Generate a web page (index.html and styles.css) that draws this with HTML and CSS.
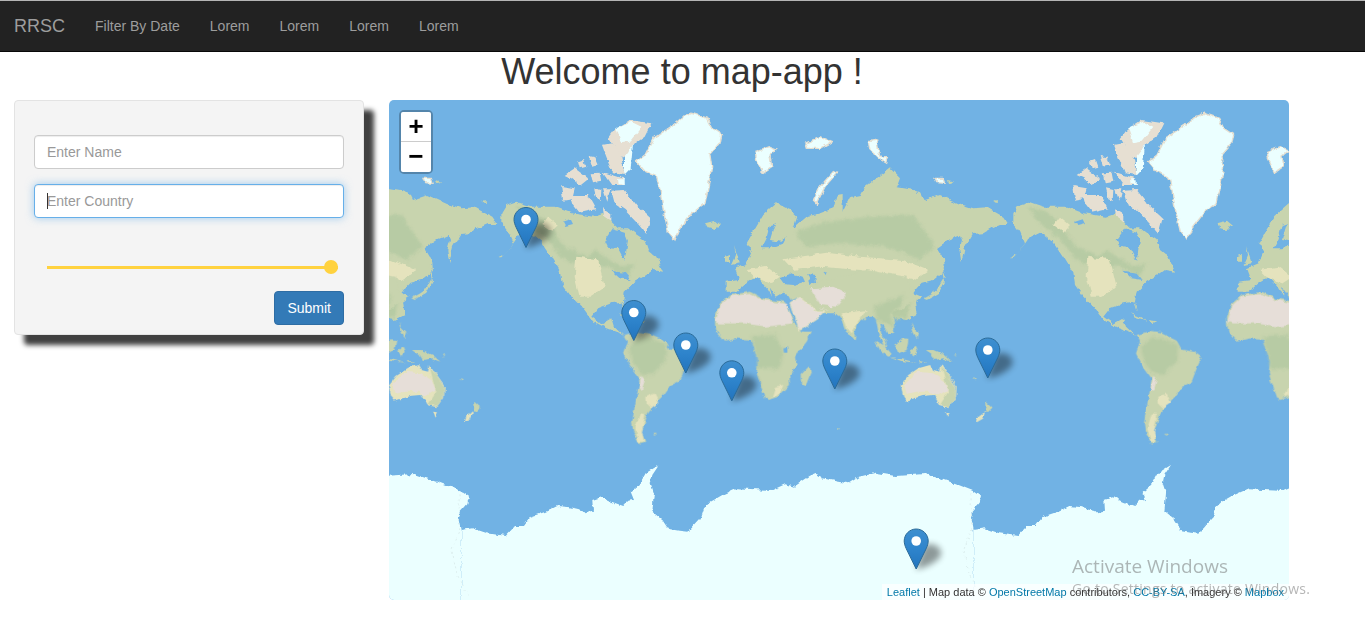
FILE: index.html
```html
<!DOCTYPE html>
<html lang="en">
<head>
  <meta charset="UTF-8" />
  <title>map-app</title>
  <link rel="stylesheet" href="styles.css">
</head>
<body>
  <nav class="navbar">
    <a class="brand" href="#">RRSC</a>
    <ul class="nav-links">
      <li><a href="#">Filter By Date</a></li>
      <li><a href="#">Lorem</a></li>
      <li><a href="#">Lorem</a></li>
      <li><a href="#">Lorem</a></li>
      <li><a href="#">Lorem</a></li>
    </ul>
  </nav>

  <h1 class="title">Welcome to map-app !</h1>

  <div class="content">
    <form class="panel">
      <input class="field" type="text" placeholder="Enter Name">
      <div class="field-wrap">
        <input class="field is-focused" type="text" placeholder="Enter Country">
        <span class="caret"></span>
      </div>
      <input class="range" type="range" min="0" max="100" value="100">
      <div class="actions"><button class="submit" type="button">Submit</button></div>
    </form>

    <div class="map">
      <svg class="tiles" viewBox="389 100 900 500" width="900" height="500">
        <defs>
          <linearGradient id="pinFill" x1="0" y1="0" x2="0" y2="1">
            <stop offset="0" stop-color="#3f8fcf"/>
            <stop offset=".5" stop-color="#2e84cc"/>
            <stop offset="1" stop-color="#2374bd"/>
          </linearGradient>
          <filter id="soft" x="-60%" y="-60%" width="220%" height="220%">
            <feGaussianBlur stdDeviation="3.4"/>
          </filter>
          <!-- roughens the polygon edges so the coasts look like coasts -->
          <filter id="rough" filterUnits="userSpaceOnUse" x="389" y="100" width="900" height="500" color-interpolation-filters="sRGB">
            <feTurbulence type="fractalNoise" baseFrequency=".14" numOctaves="3" seed="7" result="noise"/>
            <feDisplacementMap in="SourceGraphic" in2="noise" scale="5" xChannelSelector="R" yChannelSelector="G"/>
          </filter>

          <g id="pin">
            <path class="pin-shadow" d="M12 41 L20 17 C32 12 42 22 35 30 C29 36 21 39 12 41Z" filter="url(#soft)"/>
            <path class="pin-body" d="M12.5 .5C5.9 .5 .5 5.9 .5 12.5C.5 15 1.4 17.7 2.6 20.3L12.5 40.5L22.4 20.3C23.6 17.7 24.5 15 24.5 12.5C24.5 5.9 19.1 .5 12.5 .5Z"/>
            <circle class="pin-dot" cx="12.5" cy="12.5" r="4.8"/>
          </g>

          <g id="world">
            <!-- antarctica -->
            <g transform="translate(389 450) scale(.33333)">
              <polygon class="ice" points="218,240 250,235 295,250 350,258 378,228 405,228 425,200 470,185 505,168 545,172 580,180 590,190 612,185 610,150 635,142 665,155 700,168 715,152 735,150 725,125 750,105 770,70 810,45 790,75 785,100 795,130 790,185 820,210 840,240 870,245 895,248 935,205 945,175 965,155 1000,135 1045,115 1100,118 1150,120 1190,102 1215,110 1260,80 1280,72 1300,85 1350,95 1380,100 1410,80 1460,68 1520,78 1610,72 1680,95 1750,122 1776,140 1771,160 1748,185 1746,200 1754,240 1754,500 218,500"/>
              <path class="ice-line" d="M210 130 L212 240 L188 300 L205 375 L240 440"/>
            </g>

            <!-- north america -->
            <g transform="translate(448 100) scale(.33333)">
              <polygon class="land" points="160,340 175,315 205,305 250,320 320,320 370,340 440,350 470,340 490,365 510,385 540,385 560,400 590,420 600,450 625,470 645,515 615,510 595,525 560,545 530,575 525,605 530,635 520,605 490,610 450,625 430,650 460,672 490,655 498,680 530,710 515,700 475,685 430,660 400,620 370,590 345,555 340,520 310,470 280,425 240,395 210,410 170,465 195,430 180,395 160,370"/>
              <polygon class="forest" points="205,320 250,330 300,370 350,440 420,470 440,450 520,500 560,490 540,530 480,500 420,500 370,490 340,470 290,410 240,370"/>
              <polygon class="steppe" points="385,470 450,478 470,560 425,590 395,590 380,530"/>
              <polygon class="steppe" points="300,350 330,375 310,395 280,375"/>
              <polygon class="water" points="470,420 495,385 530,395 540,420 530,482 510,445 480,440"/>
              <polygon class="water" points="490,512 530,518 548,540 515,535"/>
              <polygon class="water" points="345,365 368,358 375,372 352,378"/>
              <polygon class="arctic" points="482,115 500,90 545,60 610,70 590,110 555,135 530,175 510,165"/>
              <polygon class="ice-cap" points="505,85 550,65 580,80 545,125 520,130"/>
              <polygon class="ice-cap" points="528,170 555,135 548,205 528,225"/>
              <polygon class="arctic" points="462,135 490,130 520,170 530,225 495,220 475,170"/>
              <polygon class="arctic" points="350,225 380,205 420,235 395,255 370,235"/>
              <polygon class="arctic" points="390,185 405,180 412,200 395,205"/>
              <polygon class="arctic" points="422,168 442,172 452,195 432,200"/>
              <polygon class="arctic" points="428,220 455,218 460,245 435,250"/>
              <polygon class="arctic" points="462,215 525,235 530,255 490,255"/>
              <polygon class="ice-cap" points="510,238 530,238 530,255 512,252"/>
              <polygon class="arctic" points="340,258 380,265 372,298 345,302"/>
              <polygon class="arctic" points="368,285 420,285 442,325 395,335 375,310"/>
              <polygon class="arctic" points="438,265 460,270 458,300 445,295"/>
              <polygon class="arctic" points="465,265 487,265 478,305"/>
              <polygon class="arctic" points="490,272 530,270 570,320 608,355 595,402 570,372 530,330 500,310"/>
              <polygon class="arctic" points="465,325 490,340 490,365 468,350"/>
              <polygon class="land" points="620,490 640,505 625,512"/>
              <polygon class="land" points="512,640 535,648 560,662 530,652"/>
              <polygon class="land" points="565,660 592,664 578,670"/>
              <polygon class="land" points="100,300 115,303 108,308"/>
              <polygon class="land" points="150,472 170,462 160,472"/>
            </g>

            <!-- south america -->
            <g transform="translate(508 300) scale(.33333)">
              <polygon class="land" points="350,105 385,95 425,100 470,122 485,148 520,155 545,172 530,205 515,245 488,258 465,290 445,310 420,340 410,375 400,395 412,425 395,430 375,395 372,370 380,320 390,270 395,235 365,195 348,160 360,125"/>
              <polygon class="forest" points="362,140 395,112 430,115 475,135 470,185 430,225 400,220 375,190"/>
              <polygon class="desert" points="400,228 410,238 402,272 392,268"/>
              <polygon class="steppe" points="415,290 440,280 454,310 432,325 416,310"/>
              <polygon class="steppe" points="395,340 412,342 402,395 408,425 392,425 382,385"/>
              <polygon class="land" points="432,402 447,401 440,407"/>
            </g>

            <!-- greenland, eurasia and the arctic islands -->
            <g transform="translate(620 100) scale(.33333)">
              <polygon class="ice-cap coast" points="160,75 190,50 215,40 260,55 275,85 305,105 300,130 270,165 275,200 265,260 255,310 215,340 180,385 165,420 145,395 130,330 120,270 110,230 75,215 50,185 75,165 100,115"/>
              <polygon class="land" points="380,430 400,395 430,345 470,310 510,330 532,350 520,385 560,350 600,340 640,325 650,285 668,282 668,335 690,292 722,285 732,265 770,235 810,205 840,235 830,262 880,270 905,280 915,300 960,285 1020,312 1060,325 1100,322 1150,350 1165,372 1140,372 1110,385 1085,400 1058,402 1035,440 1024,490 1018,450 1026,420 1020,405 985,420 950,445 968,475 970,515 940,540 905,548 890,565 880,580 905,590 885,605 890,645 860,660 800,650 700,650 640,640 600,640 560,620 545,610 530,585 490,578 470,590 450,560 455,590 440,565 410,530 385,545 350,575 320,575 320,545 358,540 345,505 380,490 395,455"/>
              <polygon class="forest" points="525,395 620,365 750,350 880,345 945,440 900,480 800,440 650,430 560,440"/>
              <polygon class="steppe" points="490,478 620,458 720,470 850,480 925,510 880,540 720,510 600,500 520,510"/>
              <polygon class="steppe" points="380,510 440,500 480,530 450,550 400,530"/>
              <polygon class="desert" points="575,585 640,575 680,600 650,635 600,625"/>
              <polygon class="desert" points="690,570 720,552 830,530 800,590 720,592"/>
              <polygon class="forest" points="780,610 870,600 860,655 790,660"/>
              <polygon class="water" points="450,375 465,370 450,420 485,425 500,410 490,430 450,445 425,445 440,415"/>
              <polygon class="water" points="478,535 515,520 548,530 555,545 520,555 490,552"/>
              <polygon class="water" points="562,522 585,525 592,570 575,572 570,545"/>
              <polygon class="water" points="610,515 622,518 620,528"/>
              <polygon class="land" points="255,370 285,362 300,375 285,390 265,385"/>
              <polygon class="land" points="342,435 360,490 335,495 348,465"/>
              <polygon class="land" points="315,470 330,465 330,485 315,485"/>
              <polygon class="land" points="918,598 950,570 965,545 975,530 966,505 972,545 955,578"/>
              <polygon class="land" points="962,470 972,475 975,515 965,505"/>
              <polygon class="ice-cap coast" points="405,155 445,140 470,150 450,165 455,200 428,218 410,180"/>
              <polygon class="ice-cap coast" points="555,130 600,110 635,125 600,145 560,145"/>
              <polygon class="ice-cap coast" points="580,300 600,260 640,215 650,220 615,260 590,310"/>
              <polygon class="ice-cap coast" points="745,125 770,120 780,170 805,170 800,190 775,175 750,150"/>
              <polygon class="ice-cap coast" points="945,235 970,235 975,250 950,248"/>
              <polygon class="land" points="980,240 1000,245 985,250"/>
              <polygon class="land" points="1120,305 1135,300 1130,308"/>
            </g>

            <!-- africa, south asia and oceania -->
            <g transform="translate(700 290) scale(.33333)">
              <polygon class="land" points="45,80 60,40 90,15 150,5 190,25 250,35 262,50 285,105 310,125 335,125 320,155 285,200 290,230 268,255 270,285 235,320 205,330 195,325 170,250 175,215 155,150 110,145 75,155 50,125 45,105"/>
              <polygon class="desert" points="46,95 62,45 92,18 150,12 190,30 258,42 278,100 200,110 130,100 60,100"/>
              <polygon class="forest" points="155,140 225,135 250,180 240,235 175,235 170,200"/>
              <polygon class="steppe" points="225,290 250,285 240,312 215,322"/>
              <polygon class="water" points="250,175 262,172 262,188 252,188"/>
              <polygon class="desert coastal" points="270,38 300,20 330,45 350,62 372,62 355,85 310,115 298,120 285,85"/>
              <polygon class="land" points="262,5 300,-10 500,-60 620,-40 640,30 610,55 575,65 582,95 582,125 565,130 552,110 540,100 548,135 562,172 552,170 535,125 528,88 510,70 490,90 470,105 458,142 440,130 420,78 385,60 355,52 335,40 322,30 300,20 275,30"/>
              <polygon class="desert" points="330,-5 400,-10 440,10 410,50 360,45"/>
              <polygon class="steppe" points="425,70 500,60 470,100 452,130 440,115"/>
              <polygon class="forest" points="525,50 610,15 600,55 570,70 580,115 555,100 530,90"/>
              <polygon class="land" points="328,228 332,250 318,285 303,280 302,255"/>
              <polygon class="land" points="458,135 466,138 464,148 457,146"/>
              <polygon class="land" points="525,150 550,165 575,195 565,200 540,180"/>
              <polygon class="land" points="568,200 610,208 650,218 610,214"/>
              <polygon class="land" points="585,165 610,148 625,150 620,180 595,190"/>
              <polygon class="land" points="630,180 645,170 650,185 640,200"/>
              <polygon class="land" points="632,95 640,110 655,125 650,145 640,125"/>
              <polygon class="land" points="675,180 700,180 735,195 757,215 730,205 705,210 695,195"/>
              <polygon class="land" points="656,212 680,218 660,218"/>
              <polygon class="land" points="670,25 715,0 710,10 680,30"/>
              <polygon class="land" points="765,195 772,192 768,200"/>
              <polygon class="land" points="818,264 828,268 822,271"/>
              <polygon class="steppe" points="602,285 625,255 655,235 690,225 700,240 720,245 725,222 745,255 770,290 768,320 745,352 720,345 700,315 665,318 620,332 610,320"/>
              <polygon class="land" points="725,230 745,258 768,292 765,322 745,350 722,342 745,305 735,270"/>
              <polygon class="desert" points="612,285 650,245 700,250 733,272 742,300 712,318 690,305 650,305 620,312"/>
              <polygon class="steppe" points="735,365 750,367 742,380"/>
              <polygon class="land" points="858,335 878,352 865,365 855,365 860,350"/>
              <polygon class="steppe" points="855,365 850,385 828,398 830,385"/>
              <polygon class="land" points="410,415 418,416 412,419"/>
            </g>
          </g>
        </defs>

        <g filter="url(#rough)">
          <use href="#world" x="-512"/>
          <use href="#world"/>
          <use href="#world" x="512"/>
        </g>

        <use href="#pin" x="513.5" y="207"/>
        <use href="#pin" x="621.3" y="300"/>
        <use href="#pin" x="673.3" y="332.5"/>
        <use href="#pin" x="719.3" y="360.3"/>
        <use href="#pin" x="822.3" y="348.5"/>
        <use href="#pin" x="975.3" y="337.5"/>
        <use href="#pin" x="903.7" y="528.5"/>
      </svg>

      <div class="zoom">
        <a class="zoom-btn zoom-in" href="#">+</a>
        <a class="zoom-btn zoom-out" href="#">−</a>
      </div>

      <div class="attribution"><a href="#">Leaflet</a> | Map data © <a href="#">OpenStreetMap</a> contributors, <a href="#">CC-BY-SA</a>, Imagery © <a href="#">Mapbox</a></div>
    </div>
  </div>

  <div class="activate">
    <div class="activate-title">Activate Windows</div>
    <div class="activate-sub">Go to Settings to activate Windows.</div>
  </div>
</body>
</html>
```

FILE: styles.css
```css
* {
  box-sizing: border-box;
}
html, body {
  height: 100%;
}
body {
  margin: 0;
  font-family: "Liberation Sans", Arial, sans-serif;
  font-size: 14px;
  color: #333;
  background: #fff;
  overflow: hidden;
  position: relative;
}
a {
  text-decoration: none;
}

/* navbar */
.navbar {
  display: flex;
  height: 52px;
  background: #222;
  border-top: 1px solid #b5b5b5;
  border-bottom: 1px solid #080808;
}
.brand {
  padding: 15px 15px 15px 14px;
  font-size: 18px;
  line-height: 20px;
  color: #9d9d9d;
}
.nav-links {
  display: flex;
  margin: 0;
  padding: 0;
  list-style: none;
}
.nav-links a {
  display: block;
  padding: 15px;
  line-height: 20px;
  color: #9d9d9d;
}

.title {
  margin: 0 0 8px;
  padding-right: 1px;
  height: 40px;
  font-size: 36px;
  font-weight: 500;
  line-height: 39px;
  text-align: center;
  color: #333;
}

.content {
  display: flex;
  align-items: flex-start;
  gap: 25px;
  padding-left: 14px;
}

/* form panel */
.panel {
  display: flex;
  flex-direction: column;
  width: 350px;
  height: 235px;
  padding: 34px 19px 9px;
  background: #f4f4f4;
  border: 1px solid #e3e3e3;
  border-radius: 4px;
  box-shadow: 10px 10px 5px #404040;
}
.field-wrap {
  position: relative;
}
.field {
  display: block;
  width: 100%;
  height: 34px;
  margin-bottom: 15px;
  padding: 6px 12px;
  font: 14px/20px "Liberation Sans", Arial, sans-serif;
  color: #555;
  background: #fff;
  border: 1px solid #ccc;
  border-radius: 4px;
  box-shadow: inset 0 1px 1px rgba(0,0,0,.075);
  outline: none;
}
.field::placeholder {
  color: #999;
}
.is-focused {
  border-color: #66afe9;
  box-shadow: inset 0 1px 1px rgba(0,0,0,.075), 0 0 8px rgba(102,175,233,.6);
}
.caret {
  position: absolute;
  top: 9px;
  left: 13px;
  width: 1px;
  height: 16px;
  background: #333;
}
.range {
  -webkit-appearance: none;
  appearance: none;
  display: block;
  width: 291px;
  height: 14px;
  margin: 27px 0 0 13px;
  background: transparent;
}
.range::-webkit-slider-runnable-track {
  height: 3px;
  background: #ffd23f;
}
.range::-webkit-slider-thumb {
  -webkit-appearance: none;
  width: 14px;
  height: 14px;
  margin-top: -5.5px;
  border-radius: 50%;
  background: #ffd23f;
}
.actions {
  display: flex;
  justify-content: flex-end;
  margin-top: 17px;
}
.submit {
  height: 34px;
  padding: 6px 12px;
  font: 14px/20px "Liberation Sans", Arial, sans-serif;
  color: #fff;
  background: #337ab7;
  border: 1px solid #2e6da4;
  border-radius: 4px;
}

/* map */
.map {
  position: relative;
  width: 900px;
  height: 500px;
  overflow: hidden;
  background: #71b2e4;
  border-radius: 5px;
}
.tiles {
  display: block;
}
.land { fill: #c8d4ae; }
.forest { fill: #b7cba4; filter: blur(5px); }
.steppe { fill: #e5e3bd; filter: blur(2px); }
.desert { fill: #e6ded8; filter: blur(2px); }
.arctic { fill: #e6dfd2; }
.water { fill: #71b2e4; }
.ice, .ice-cap { fill: #ebffff; }
.coast { stroke: #e6dfd0; stroke-width: 4; }
.coastal { stroke: #e5e3bd; stroke-width: 3; }
.ice-line {
  fill: none;
  stroke: #dceeee;
  stroke-width: 3;
  stroke-dasharray: 6 9;
}
.pin-shadow {
  fill: #000;
  opacity: .4;
}
.pin-body {
  fill: url(#pinFill);
  stroke: #2b6a97;
}
.pin-dot {
  fill: #fff;
}

.zoom {
  position: absolute;
  top: 10px;
  left: 10px;
  border: 2px solid rgba(0,0,0,.25);
  border-radius: 5px;
  background-clip: padding-box;
}
.zoom-btn {
  display: block;
  width: 30px;
  height: 30px;
  overflow: hidden;
  font: bold 26px/33px "Liberation Mono", monospace;
  text-align: center;
  color: #000;
  background: #fff;
}
.zoom-in {
  border-bottom: 1px solid #ccc;
  border-radius: 2px 2px 0 0;
}
.zoom-out {
  border-radius: 0 0 2px 2px;
}

.attribution {
  position: absolute;
  right: 0;
  bottom: 0;
  padding: 0 5px;
  font-size: 11px;
  line-height: 16px;
  color: #333;
  background: rgba(255,255,255,.7);
}
.attribution a {
  color: #0078a8;
}

/* windows watermark */
.activate {
  position: absolute;
  top: 553px;
  left: 1072px;
  font-family: "Open Sans", sans-serif;
  color: rgba(110,110,110,.5);
  white-space: nowrap;
}
.activate-title {
  font-size: 19px;
  line-height: 26px;
}
.activate-sub {
  font-size: 14px;
  line-height: 20px;
  letter-spacing: .25px;
}
```
